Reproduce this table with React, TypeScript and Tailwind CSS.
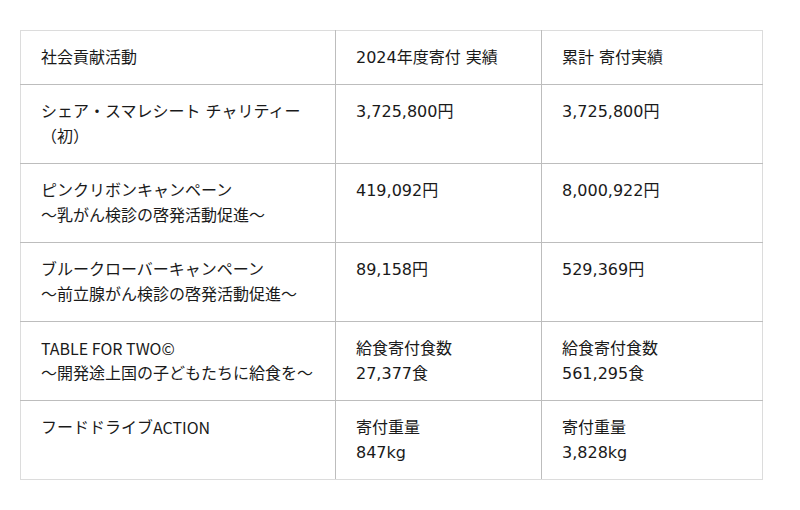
import React from "react";

const rows: { a: React.ReactNode; b: React.ReactNode; c: React.ReactNode }[] = [
  {
    a: (
      <>
        シェア・スマレシート チャリティー
        <br />
        （初）
      </>
    ),
    b: "3,725,800円",
    c: "3,725,800円",
  },
  {
    a: (
      <>
        ピンクリボンキャンペーン
        <br />
        ～乳がん検診の啓発活動促進～
      </>
    ),
    b: "419,092円",
    c: "8,000,922円",
  },
  {
    a: (
      <>
        ブルークローバーキャンペーン
        <br />
        ～前立腺がん検診の啓発活動促進～
      </>
    ),
    b: "89,158円",
    c: "529,369円",
  },
  {
    a: (
      <>
        <span className="font-['Noto_Sans_CJK_JP'] inline-block h-[25px] align-top">TABLE FOR TWO©</span>
        <br />
        ～開発途上国の子どもたちに給食を～
      </>
    ),
    b: (
      <>
        給食寄付食数
        <br />
        27,377食
      </>
    ),
    c: (
      <>
        給食寄付食数
        <br />
        561,295食
      </>
    ),
  },
  {
    a: (
      <>
        フードドライブ<span className="font-['Noto_Sans_CJK_JP'] inline-block h-[25px] align-top">ACTION</span>
      </>
    ),
    b: (
      <>
        寄付重量
        <br />
        847kg
      </>
    ),
    c: (
      <>
        寄付重量
        <br />
        3,828kg
      </>
    ),
  },
];

export default function App() {
  const cell =
    "border border-[#bdbdbd] px-5 py-[14px] align-top text-left font-normal";
  return (
    <div className="w-[800px] h-[510px] bg-white pt-[30px] pl-[20px] font-['DejaVu_Sans','Noto_Sans_CJK_JP',sans-serif] text-[16px] leading-[25px] text-[#1a1a1a]">
      <table className="w-[742px] border-collapse table-fixed">
        <colgroup>
          <col className="w-[315px]" />
          <col className="w-[206px]" />
          <col className="w-[221px]" />
        </colgroup>
        <thead>
          <tr>
            <th className={cell + " border-t-[#dcdcdc] border-l-[#dcdcdc]"}>社会貢献活動</th>
            <th className={cell + " border-t-[#dcdcdc]"}>2024年度寄付 実績</th>
            <th className={cell + " border-t-[#dcdcdc] border-r-[#dcdcdc]"}>累計 寄付実績</th>
          </tr>
        </thead>
        <tbody>
          {rows.map((r, i) => (
            <tr key={i} className="h-[79px]">
              <td
                className={
                  cell +
                  " border-l-[#dcdcdc]" +
                  (i === rows.length - 1 ? " border-b-[#dcdcdc]" : "")
                }
              >
                {r.a}
              </td>
              <td className={cell + (i === rows.length - 1 ? " border-b-[#dcdcdc]" : "")}>
                {r.b}
              </td>
              <td
                className={
                  cell +
                  " border-r-[#dcdcdc]" +
                  (i === rows.length - 1 ? " border-b-[#dcdcdc]" : "")
                }
              >
                {r.c}
              </td>
            </tr>
          ))}
        </tbody>
      </table>
    </div>
  );
}
